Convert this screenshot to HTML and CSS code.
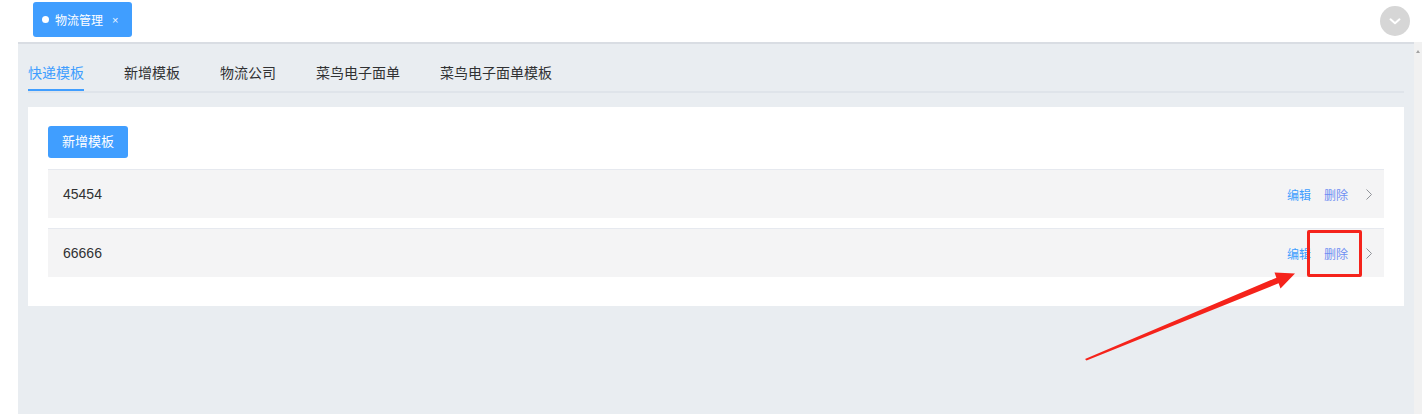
FILE: index.html
```html
<!DOCTYPE html>
<html lang="zh-CN">
<head>
    <meta charset="UTF-8">
    <meta name="viewport" content="width=device-width, initial-scale=1.0">
    <title>物流管理</title>
    <link rel="stylesheet" href="styles.css">
</head>
<body>
    <div class="topbar">
        <div class="tag">
            <span class="tag-dot"></span>
            <span class="tag-text">物流管理</span>
            <span class="tag-close">×</span>
        </div>
        <div class="more">
            <svg viewBox="0 0 16 16"><path d="M4 6.5l4 3.5 4-3.5" fill="none" stroke="#fff" stroke-width="1.8" stroke-linecap="round" stroke-linejoin="round"/></svg>
        </div>
    </div>

    <div class="main">
        <div class="side"></div>
        <div class="content">
            <div class="tabs">
                <div class="tab active">快递模板</div>
                <div class="tab">新增模板</div>
                <div class="tab">物流公司</div>
                <div class="tab">菜鸟电子面单</div>
                <div class="tab">菜鸟电子面单模板</div>
            </div>

            <div class="card">
                <button class="btn">新增模板</button>
                <div class="row">
                    <span class="row-name">45454</span>
                    <div class="row-actions">
                        <a href="#" class="edit">编辑</a>
                        <a href="#" class="del">删除</a>
                        <svg class="arrow" viewBox="0 0 6 11"><path d="M0.5 0.5l5 5-5 5" fill="none" stroke="#909399" stroke-width="1"/></svg>
                    </div>
                </div>
                <div class="row">
                    <span class="row-name">66666</span>
                    <div class="row-actions">
                        <a href="#" class="edit">编辑</a>
                        <a href="#" class="del">删除</a>
                        <svg class="arrow" viewBox="0 0 6 11"><path d="M0.5 0.5l5 5-5 5" fill="none" stroke="#909399" stroke-width="1"/></svg>
                    </div>
                </div>
            </div>
        </div>
        <div class="scrollbar"><span class="scroll-up"></span></div>
    </div>

    <!-- annotation -->
    <div class="mark-box"></div>
    <svg class="mark-arrow" viewBox="0 0 1422 414">
        <polygon points="1085,359 1276.4,277.7 1274.5,272.6 1295,273.5 1280.5,288.4 1278.6,283.3 1086.5,360.5" fill="#f5231b"/>
    </svg>
</body>
</html>
```

FILE: styles.css
```css
body {
    margin: 0;
    width: 1422px;
    height: 414px;
    overflow: hidden;
    background: #fff;
    font-family: "Liberation Sans", "Noto Sans CJK SC", sans-serif;
    color: #303133;
    position: relative;
}

.topbar {
    height: 42px;
    display: flex;
    align-items: flex-start;
    justify-content: space-between;
    padding: 2px 12px 0 33px;
    box-sizing: border-box;
}

.tag {
    height: 35px;
    width: 99px;
    box-sizing: border-box;
    background: #409eff;
    border-radius: 3px;
    color: #fff;
    display: flex;
    align-items: center;
    padding-left: 9px;
}

.tag-dot {
    width: 7px;
    height: 7px;
    border-radius: 50%;
    background: #fff;
    margin-right: 6px;
}

.tag-text {
    font-size: 12px;
}

.tag-close {
    font-size: 11px;
    margin-left: 9px;
    opacity: 0.9;
}

.more {
    width: 30px;
    height: 30px;
    margin-top: 4px;
    border-radius: 50%;
    background: #d6d6d6;
    display: flex;
    align-items: center;
    justify-content: center;
}

.more svg {
    width: 18px;
    height: 18px;
}

.main {
    display: flex;
    height: 372px;
}

.side {
    width: 18px;
    background: #fff;
}

.content {
    flex: 1;
    background: #e9edf1;
    border-top: 2px solid #d9dde3;
    padding: 7px 10px 0;
}

.tabs {
    display: flex;
    gap: 40px;
    border-bottom: 2px solid #dfe4ea;
    height: 40px;
}

.tab {
    font-size: 14px;
    height: 40px;
    box-sizing: border-box;
    padding-top: 3px;
    line-height: 37px;
    color: #303133;
    font-family: "Noto Sans CJK SC", sans-serif;
}

.tab.active {
    color: #409eff;
    border-bottom: 2px solid #409eff;
}

.card {
    margin-top: 14px;
    background: #fff;
    padding: 19px 20px 29px;
}

.btn {
    display: block;
    width: 80px;
    height: 32px;
    padding: 0 0 3px;
    border: none;
    border-radius: 3px;
    background: #409eff;
    color: #fff;
    font-size: 13px;
    font-family: "Noto Sans CJK SC", sans-serif;
    margin-bottom: 11px;
}

.row {
    height: 48px;
    background: #f4f4f5;
    border-top: 1px solid #e6e9ef;
    display: flex;
    align-items: center;
    justify-content: space-between;
    padding: 0 12px 0 15px;
    margin-bottom: 10px;
}

.row:last-child {
    margin-bottom: 0;
}

.row-name {
    font-size: 14px;
    color: #303133;
}

.row-actions {
    display: flex;
    align-items: center;
    font-size: 12px;
    font-family: "Noto Sans CJK SC", sans-serif;
}

.row-actions a {
    text-decoration: none;
}

.edit {
    color: #409eff;
    margin-right: 13px;
}

.del {
    color: #6e8ef3;
    margin-right: 18px;
}

.arrow {
    width: 6px;
    height: 11px;
}

.scrollbar {
    width: 8px;
    background: #f1f1f1;
    position: relative;
}

.scroll-up {
    position: absolute;
    top: 8px;
    left: 2px;
    border-left: 2px solid transparent;
    border-right: 2px solid transparent;
    border-bottom: 3px solid #a3a3a3;
}

.mark-box {
    position: absolute;
    left: 1307px;
    top: 230px;
    width: 49px;
    height: 41px;
    border: 3px solid #f5231b;
    border-radius: 2px;
}

.mark-arrow {
    position: absolute;
    left: 0;
    top: 0;
    width: 1422px;
    height: 414px;
    pointer-events: none;
}
```
